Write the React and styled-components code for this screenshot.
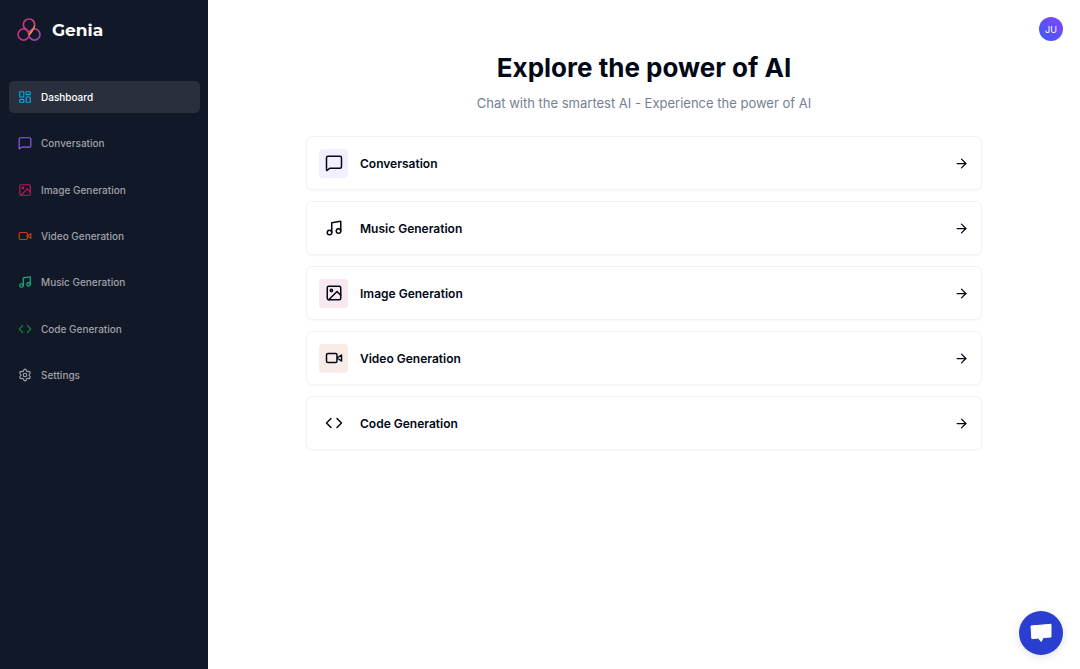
import React from 'react'
import styled, { createGlobalStyle } from 'styled-components'
import {
  ArrowRight,
  Code,
  LayoutDashboard,
  MessageSquare,
  Music,
  Settings,
} from 'lucide-react'

//shared outline settings for the hand drawn icons
const Outline = ({ size = 24, color = 'currentColor', children }) => (
  <svg width={size} height={size} viewBox="0 0 24 24" fill="none" stroke={color} strokeWidth="2" strokeLinecap="round" strokeLinejoin="round">
    {children}
  </svg>
)

const VideoIcon = (props) => (
  <Outline {...props}>
    <path d="m22 8-6 4 6 4V8Z" />
    <rect x="2" y="6" width="14" height="12" rx="2" />
  </Outline>
)

const ImageIcon = (props) => (
  <Outline {...props}>
    <rect x="3" y="3" width="18" height="18" rx="2" />
    <circle cx="8.5" cy="8.5" r="1.5" />
    <path d="M21 15l-5-5L5 21" />
  </Outline>
)

const routes = [
  { label: 'Dashboard', icon: LayoutDashboard, href: '/dashboard', color: '#0ea5e9' },
  { label: 'Conversation', icon: MessageSquare, href: '/conversation', color: '#8b5cf6' },
  { label: 'Image Generation', icon: ImageIcon, href: '/image', color: '#be185d' },
  { label: 'Video Generation', icon: VideoIcon, href: '/video', color: '#c2410c' },
  { label: 'Music Generation', icon: Music, href: '/music', color: '#10b981' },
  { label: 'Code Generation', icon: Code, href: '/code', color: '#15803d' },
  { label: 'Settings', icon: Settings, href: '/settings', color: '#a1a1aa' },
]

const tools = [
  { label: 'Conversation', icon: MessageSquare, href: '/conversation', bg: '#f3effe' },
  { label: 'Music Generation', icon: Music, href: '/music', bg: 'transparent' },
  { label: 'Image Generation', icon: ImageIcon, href: '/image', bg: '#f8e8ef' },
  { label: 'Video Generation', icon: VideoIcon, href: '/video', bg: '#f9ece7' },
  { label: 'Code Generation', icon: Code, href: '/code', bg: 'transparent' },
]

const Logo = () => (
  <svg width="24" height="24" viewBox="0 0 24 24" fill="none" strokeWidth="1.7">
    <defs>
      <linearGradient id="logoTop" x1="6" y1="2" x2="18" y2="12" gradientUnits="userSpaceOnUse">
        <stop offset="0" stopColor="#c32f8e" />
        <stop offset="1" stopColor="#e8506a" />
      </linearGradient>
      <linearGradient id="logoRight" x1="12" y1="12" x2="23" y2="22" gradientUnits="userSpaceOnUse">
        <stop offset="0" stopColor="#c03a8c" />
        <stop offset="1" stopColor="#7a4fb0" />
      </linearGradient>
      <linearGradient id="logoCross" x1="17" y1="7" x2="12" y2="17" gradientUnits="userSpaceOnUse">
        <stop offset="0" stopColor="#f0625a" />
        <stop offset="1" stopColor="#fdb32e" />
      </linearGradient>
    </defs>
    <circle cx="17.4" cy="16.5" r="5.6" stroke="url(#logoRight)" />
    <circle cx="6.6" cy="16.5" r="5.6" stroke="#c02f8a" />
    <path d="M9 11.500C7.300 10.300 6.300 8.500 6.300 6.700a5.700 5.700 0 0 1 11.400 0" stroke="url(#logoTop)" />
    <path d="M17.700 6.700c0 2.300-1.300 4.300-2.700 6.200-1 1.300-2 2.600-3 4.200" stroke="url(#logoCross)" />
    <path d="M9 11.500c1.700 1 2.700 2.500 3 5" stroke="#c8378a" />
  </svg>
)

const App = () => {
  return (
    <>
      <GlobalStyle />
      <Layout>
        <Sidebar>
          <Brand href="/dashboard">
            <Logo />
            <BrandName>Genia</BrandName>
          </Brand>
          <Nav>
            {routes.map(({ label, icon: Icon, href, color }) => (
              <NavLink key={href} href={href} $active={href === '/dashboard'}>
                <Icon size={14} color={color} />
                {label}
              </NavLink>
            ))}
          </Nav>
        </Sidebar>

        <Main>
          <Topbar>
            <Avatar type="button" aria-label="Account">JU</Avatar>
          </Topbar>
          <Hero>
            <Title>Explore the power of AI</Title>
            <Subtitle>Chat with the smartest AI - Experience the power of AI</Subtitle>
          </Hero>
          <ToolList>
            {tools.map(({ label, icon: Icon, href, bg }) => (
              <ToolCard key={href} href={href}>
                <ToolIcon $bg={bg}>
                  <Icon size={18} />
                </ToolIcon>
                <ToolName>{label}</ToolName>
                <ArrowRight size={15} />
              </ToolCard>
            ))}
          </ToolList>
        </Main>
      </Layout>

      <ChatButton type="button" aria-label="Open chat">
        <svg width="22" height="20" viewBox="0 0 22 20" fill="#fff">
          <path d="M1 3 21 1.300V14L13.200 14.600 11.200 18.500 8.300 15.100 1.800 15.600Z" stroke="#fff" strokeLinejoin="round" />
        </svg>
      </ChatButton>
    </>
  )
}

const GlobalStyle = createGlobalStyle`
  * {
    box-sizing: border-box;
  }
  body {
    margin: 0;
    background-color: #fff;
    color: #020817;
    font-family: Inter, sans-serif;
  }
`

const Layout = styled.div`
  display: flex;
  min-height: 100vh;
`

const Sidebar = styled.aside`
  flex: none;
  width: 208px;
  padding: 12px 8px 12px 9px;
  background-color: #111827;
`

const Brand = styled.a`
  display: flex;
  align-items: center;
  gap: 11px;
  height: 35px;
  padding-left: 8px;
  margin-bottom: 34px;
  color: #fff;
  text-decoration: none;
`

const BrandName = styled.span`
  font-family: Montserrat, Inter, sans-serif;
  font-size: 17px;
  font-weight: 700;
`

const Nav = styled.nav`
  display: flex;
  flex-direction: column;
  justify-content: space-between;
  min-height: 310px;
`

const NavLink = styled.a`
  display: flex;
  align-items: center;
  gap: 9px;
  height: 32px;
  padding: 0 9px;
  border-radius: 5px;
  font-size: 10px;
  font-weight: 500;
  text-decoration: none;
  color: ${(props) => (props.$active ? '#fff' : '#a1a1aa')};
  background-color: ${(props) => (props.$active ? '#292f3d' : 'transparent')};
  &:hover {
    color: #fff;
    background-color: #292f3d;
  }
`

const Main = styled.main`
  flex: 1;
  min-width: 0;
`

const Topbar = styled.header`
  display: flex;
  justify-content: flex-end;
  padding: 17px 17px 0;
`

const Avatar = styled.button`
  width: 24px;
  height: 24px;
  padding: 0;
  border: none;
  border-radius: 50%;
  background: linear-gradient(45deg, #3b5bfb, #8345f5);
  color: #fff;
  font-family: Inter, sans-serif;
  font-size: 9px;
  cursor: pointer;
`

const Hero = styled.div`
  display: flex;
  flex-direction: column;
  align-items: center;
  gap: 10px;
  margin-top: 12px;
  text-align: center;
`

const Title = styled.h1`
  margin: 0;
  font-size: 26px;
  line-height: 30px;
  font-weight: 700;
`

const Subtitle = styled.p`
  margin: 0;
  font-size: 13px;
  line-height: 20px;
  font-weight: 400;
  color: #748094;
`

const ToolList = styled.div`
  display: flex;
  flex-direction: column;
  gap: 11px;
  margin-top: 23px;
  padding: 0 98px;
`

const ToolCard = styled.a`
  display: flex;
  align-items: center;
  gap: 12px;
  height: 54px;
  padding: 0 12px;
  border: 1px solid #f3f3f5;
  border-radius: 6px;
  box-shadow: 0 1px 2px rgba(0, 0, 0, 0.04);
  color: #020817;
  text-decoration: none;
  &:hover {
    box-shadow: 0 3px 6px rgba(0, 0, 0, 0.1);
  }
`

const ToolIcon = styled.span`
  display: flex;
  align-items: center;
  justify-content: center;
  width: 29px;
  height: 29px;
  border-radius: 4px;
  background-color: ${(props) => props.$bg};
`

const ToolName = styled.span`
  flex: 1;
  font-size: 12px;
  font-weight: 600;
`

//floats over the page in the corner
const ChatButton = styled.button`
  position: fixed;
  right: 17px;
  bottom: 14px;
  display: flex;
  align-items: center;
  justify-content: center;
  width: 44px;
  height: 44px;
  padding: 0;
  border: none;
  border-radius: 50%;
  background-color: #2a3fd0;
  box-shadow: 0 2px 8px rgba(0, 0, 0, 0.12);
  cursor: pointer;
`

export default App
